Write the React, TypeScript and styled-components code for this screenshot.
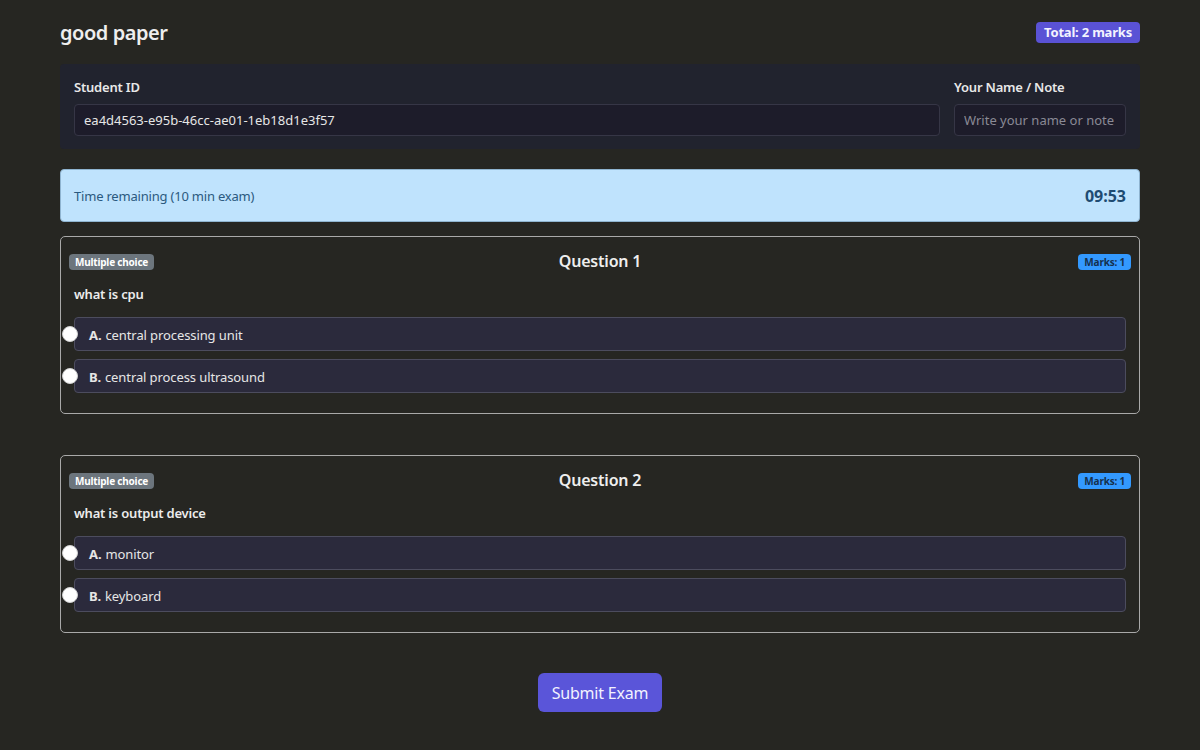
import React from "react";
import styled, { createGlobalStyle } from "styled-components";

const Global = createGlobalStyle`
  html, body { margin: 0; padding: 0; background: #262622; }
  body { font-family: "Noto Sans", "Open Sans", sans-serif; color: #e6e6e6; }
  * { box-sizing: border-box; }
`;

const Page = styled.div`
  width: 1080px;
  margin: 0 auto;
  padding: 19px 0 38px;
  display: flex;
  flex-direction: column;
`;

const TopBar = styled.div`
  display: flex;
  justify-content: space-between;
  align-items: center;
  height: 26px;
`;

const Title = styled.h1`
  margin: 0;
  font-size: 20px;
  font-weight: 600;
  color: #eeeeee;
  letter-spacing: -0.45px;
`;

const Badge = styled.span<{ $bg: string; $fg: string; $size: number }>`
  display: inline-flex;
  align-items: center;
  background: ${(p) => p.$bg};
  color: ${(p) => p.$fg};
  font-size: ${(p) => p.$size}px;
  font-weight: 700;
  border-radius: 4px;
  padding: 0 ${(p) => (p.$size > 11 ? 8 : 6)}px;
  height: ${(p) => (p.$size > 11 ? 21 : 16)}px;
  line-height: 1;
  white-space: nowrap;
  letter-spacing: -0.2px;
`;

const InfoPanel = styled.div`
  margin-top: 19px;
  background: #21232e;
  border-radius: 4px;
  padding: 14px 14px 13px;
  display: grid;
  grid-template-columns: 1fr 172px;
  gap: 14px;
`;

const Field = styled.div`
  display: flex;
  flex-direction: column;
  gap: 8px;
`;

const Label = styled.label`
  font-size: 13px;
  font-weight: 600;
  color: #e8e8e8;
  height: 18px;
  line-height: 18px;
  letter-spacing: -0.2px;
`;

const Input = styled.input`
  height: 32px;
  background: #1d1c2a;
  border: 1px solid #363646;
  border-radius: 4px;
  color: #e6e6e6;
  font-family: inherit;
  font-size: 13px;
  padding: 0 9px;
  outline: none;
  width: 100%;
  letter-spacing: 0px;
  &::placeholder { color: #8a8a95; }
`;

const TimerBox = styled.div`
  margin-top: 20px;
  height: 53px;
  background: #bfe3fd;
  border: 1px solid #8fb4d0;
  border-radius: 4px;
  display: flex;
  align-items: center;
  justify-content: space-between;
  padding: 0 13px;
`;

const TimerLabel = styled.span`
  font-size: 13px;
  color: #2b5a80;
  letter-spacing: -0.2px;
`;

const TimerValue = styled.span`
  font-size: 16px;
  font-weight: 700;
  color: #1e4b72;
`;

const Card = styled.section<{ $first?: boolean }>`
  margin-top: ${(p) => (p.$first ? 14 : 41)}px;
  border: 1px solid #a9a9a9;
  border-radius: 5px;
  padding: 17px 13px 20px 13px;
`;

const CardHeader = styled.div`
  display: grid;
  grid-template-columns: 1fr auto 1fr;
  align-items: center;
  margin: 0 -5px 0 -5px;
  height: 16px;
`;

const HeaderLeft = styled.div`
  display: flex;
  justify-content: flex-start;
`;

const HeaderRight = styled.div`
  display: flex;
  justify-content: flex-end;
`;

const QTitle = styled.h2`
  margin: 0;
  font-size: 16px;
  line-height: 16px;
  font-weight: 600;
  color: #eeeeee;
  letter-spacing: -0.2px;
  position: relative;
  top: -1px;
`;

const QText = styled.p`
  margin: 15px 0 0;
  font-size: 13px;
  font-weight: 600;
  color: #ececec;
  height: 18px;
  line-height: 18px;
  letter-spacing: -0.2px;
`;

const Options = styled.div`
  margin-top: 14px;
  display: flex;
  flex-direction: column;
  gap: 8px;
`;

const Option = styled.label`
  position: relative;
  height: 34px;
  background: #2b2a3c;
  border: 1px solid #4c4c5e;
  border-radius: 4px;
  display: flex;
  align-items: center;
  padding: 1px 14px 0;
  font-size: 13px;
  color: #e6e6e6;
  cursor: pointer;
  letter-spacing: -0.1px;
`;

const Radio = styled.span`
  position: absolute;
  left: -13px;
  top: 50%;
  width: 16px;
  height: 16px;
  margin-top: -8px;
  border-radius: 50%;
  background: #ffffff;
  border: 1px solid #d0d0d0;
`;

const Letter = styled.b`
  font-weight: 700;
  margin-right: 4px;
`;

const SubmitRow = styled.div`
  margin-top: 40px;
  display: flex;
  justify-content: center;
`;

const SubmitButton = styled.button`
  height: 39px;
  padding: 0 14px;
  background: #5a55d9;
  color: #f2f2ff;
  border: none;
  border-radius: 6px;
  font-family: inherit;
  font-size: 16px;
  cursor: pointer;
  letter-spacing: -0.2px;
`;

const questions = [
  {
    n: 1,
    text: "what is cpu",
    options: ["central processing unit", "central process ultrasound"],
  },
  {
    n: 2,
    text: "what is output device",
    options: ["monitor", "keyboard"],
  },
];

export default function App() {
  return (
    <>
      <Global />
      <Page>
        <TopBar>
          <Title>good paper</Title>
          <Badge $bg="#5a52d5" $fg="#f3f3ff" $size={13}>
            Total: 2 marks
          </Badge>
        </TopBar>

        <InfoPanel>
          <Field>
            <Label>Student ID</Label>
            <Input readOnly value="ea4d4563-e95b-46cc-ae01-1eb18d1e3f57" />
          </Field>
          <Field>
            <Label>Your Name / Note</Label>
            <Input placeholder="Write your name or note here" />
          </Field>
        </InfoPanel>

        <TimerBox>
          <TimerLabel>Time remaining (10 min exam)</TimerLabel>
          <TimerValue>09:53</TimerValue>
        </TimerBox>

        {questions.map((q, i) => (
          <Card key={q.n} $first={i === 0}>
            <CardHeader>
              <HeaderLeft>
                <Badge $bg="#6c757d" $fg="#ffffff" $size={10}>
                  Multiple choice
                </Badge>
              </HeaderLeft>
              <QTitle>Question {q.n}</QTitle>
              <HeaderRight>
                <Badge $bg="#3399ff" $fg="#15304d" $size={10}>
                  Marks: 1
                </Badge>
              </HeaderRight>
            </CardHeader>
            <QText>{q.text}</QText>
            <Options>
              {q.options.map((o, j) => (
                <Option key={o}>
                  <Radio />
                  <Letter>{String.fromCharCode(65 + j)}.</Letter>
                  {o}
                </Option>
              ))}
            </Options>
          </Card>
        ))}

        <SubmitRow>
          <SubmitButton>Submit Exam</SubmitButton>
        </SubmitRow>
      </Page>
    </>
  );
}
